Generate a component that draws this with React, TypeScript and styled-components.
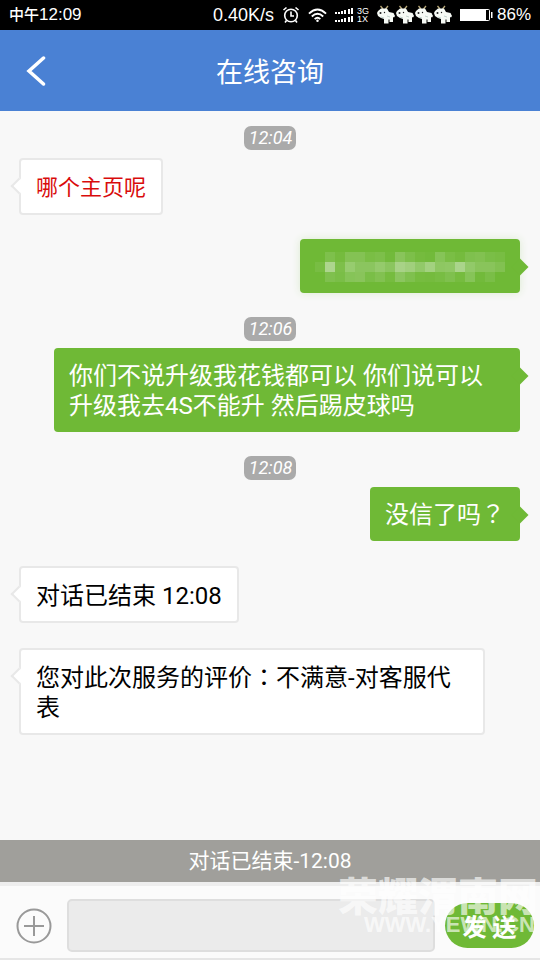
import React from "react";
import styled, { createGlobalStyle, css } from "styled-components";

const Global = createGlobalStyle`
  *, *::before, *::after { box-sizing: border-box; }
  body {
    margin: 0;
    background: #f8f8f8;
    font-family: Roboto, "Noto Sans CJK SC", sans-serif;
  }
`;

const Screen = styled.div`
  display: flex;
  flex-direction: column;
  min-height: 100vh;
`;

const StatusBar = styled.div`
  display: flex;
  align-items: center;
  justify-content: space-between;
  height: 30px;
  padding: 0 9px;
  background: #000;
  color: #fff;
  font-family: "Liberation Sans", "Noto Sans CJK SC", sans-serif;
  font-size: 17px;
  line-height: 30px;
`;

const Clock = styled.span`
  display: flex;
`;

const DayPart = styled.span`
  font-size: 15px;
  font-weight: 500;
`;

const StatusGroup = styled.div`
  display: flex;
  align-items: center;
  gap: 8px;
`;

const Speed = styled.span`
  font-size: 18px;
`;

const Signal = styled.span`
  display: flex;
  align-items: center;
  gap: 3px;
`;

const Network = styled.span`
  display: flex;
  flex-direction: column;
  font-size: 9px;
  line-height: 8px;
`;

const Goats = styled.span`
  display: flex;
  gap: 1px;
`;

const Battery = styled.span`
  display: flex;
  align-items: center;
  gap: 4px;
`;

const Header = styled.header`
  display: grid;
  grid-template-columns: 72px 1fr 72px;
  align-items: center;
  height: 81px;
  background: #4a81d4;
  color: #fff;
`;

const BackButton = styled.button`
  display: flex;
  align-items: center;
  justify-content: center;
  height: 81px;
  padding: 0;
  border: 0;
  background: none;
  color: inherit;
`;

const Title = styled.h1`
  margin: 0;
  padding-top: 4px;
  font-size: 27px;
  line-height: 36px;
  font-weight: 400;
  text-align: center;
`;

const Chat = styled.main`
  flex: 1;
  display: flex;
  flex-direction: column;
  align-items: flex-start;
  padding: 15px 20px 0;
`;

const TimeStamp = styled.time`
  align-self: center;
  height: 24px;
  margin-bottom: 7px;
  padding: 0 4px 0 5px;
  border-radius: 7px;
  background: #aaa;
  color: #fff;
  font-size: 18px;
  line-height: 24px;
  font-style: italic;
`;

const Bubble = styled.p<{ $mine?: boolean; $alert?: boolean }>`
  position: relative;
  max-width: calc(100% - 34px);
  margin: 0 0 24px;
  border-radius: 4px;
  font-size: ${(p) => (p.$alert ? 22 : 24)}px;
  line-height: 30px;

  &::after {
    content: "";
    position: absolute;
    width: 12px;
    height: 12px;
    transform: rotate(45deg);
  }

  ${(p) =>
    p.$mine
      ? css`
          align-self: flex-end;
          padding: 13px 15px 11px;
          background: #6fb936;
          color: #fff;
          &::after {
            top: 22px;
            right: -6px;
            background: #6fb936;
          }
        `
      : css`
          margin-top: 1px;
          margin-left: -1px;
          padding: 13px 15px 10px;
          border: 2px solid #e8e8e8;
          background: #fff;
          color: ${p.$alert ? "#d90b0b" : "#000"};
          &::after {
            top: 20px;
            left: -8px;
            border: solid #e8e8e8;
            border-width: 0 0 2px 2px;
            background: #fff;
          }
        `}
`;

const CensoredBubble = styled(Bubble)`
  box-shadow: 0 0 8px #dcebd0;
`;

const MosaicArt = styled.svg`
  display: block;
  width: 190px;
  height: 30px;
`;

const Mark = styled.span`
  font-family: "Noto Sans CJK TC", sans-serif;
  line-height: 24px;
`;

const Notice = styled.div`
  height: 42px;
  background: #a09f9b;
  color: #fff;
  font-size: 21px;
  line-height: 42px;
  text-align: center;
`;

const Composer = styled.form`
  position: relative;
  display: flex;
  align-items: center;
  gap: 10px;
  height: 78px;
  padding: 6px 6px 0 16px;
  border-top: 4px solid #eee;
  border-bottom: 2px solid #e6e6e6;
  background: #fbfbfb;
`;

const AddButton = styled.button`
  display: flex;
  padding: 2px 0 0;
  border: 0;
  background: none;
`;

const Field = styled.input`
  flex: 1;
  min-width: 0;
  height: 53px;
  margin-left: 5px;
  padding: 0 12px;
  border: 2px solid #dedede;
  border-radius: 5px;
  background: #ebebeb;
  font-size: 24px;
`;

const SendButton = styled.button`
  width: 89px;
  height: 45px;
  padding: 0;
  border: 0;
  border-radius: 23px;
  background: #6fb936;
  color: #fff;
  font-family: inherit;
  font-size: 24px;
  font-weight: 700;
`;

const Watermark = styled.div`
  position: absolute;
  right: 2px;
  bottom: 22px;
  color: rgba(255, 255, 255, 0.65);
  font-family: "Noto Sans CJK SC", sans-serif;
  font-weight: 900;
  font-size: 40px;
  line-height: 40px;
  text-align: right;
  pointer-events: none;
`;

const WatermarkSite = styled.div`
  padding-right: 3px;
  font-family: "Liberation Sans", sans-serif;
  font-weight: 700;
  font-size: 22px;
  line-height: 22px;
`;

const AlarmIcon = () => (
  <svg width="18" height="18" viewBox="0 0 18 18" fill="none" stroke="#fff" strokeWidth="1.6">
    <circle cx="9" cy="9.5" r="6.3" />
    <path d="M9 5.500v4.500h3M1.500 4l3-2.500M16.500 4l-3-2.500M4.500 14.500l-1.500 2M13.500 14.500l1.500 2" />
  </svg>
);

const WifiIcon = () => (
  <svg width="19" height="16" viewBox="0 0 20 16" fill="none" stroke="#fff" strokeWidth="2">
    <path d="M1 6.500Q10-2 19 6.500M4 9.500Q10 4 16 9.500M7 12.300Q10 9.500 13 12.300" />
    <circle cx="10" cy="14" r="1.3" fill="#fff" stroke="none" />
  </svg>
);

const barHeights = [2, 2, 3, 4, 5, 6];

const SignalBars = () => (
  <svg width="19" height="15" viewBox="0 0 19 15" fill="#fff">
    {barHeights.map((h, i) => (
      <React.Fragment key={i}>
        <rect x={i * 3 + (i > 3 ? 1 : 0)} y={6 - h} width="2" height={h} />
        <rect x={i * 3 + (i > 3 ? 1 : 0)} y={14 - h} width="2" height={h} />
      </React.Fragment>
    ))}
  </svg>
);

const Goat = () => (
  <svg width="18" height="20" viewBox="0 0 18 20">
    <path d="M3.500 1l2.500 3M11 1L8.500 4" stroke="#b8a878" strokeWidth="1.3" />
    <path
      d="M1 6l3-2.500h6l2 3.500 4.500 1 1.500 3-1 1.500-1-.500v5h-3.500v-2.500h-1v4H7v-4.500l-3-1-3-2-1-3z"
      fill="#f6faf5"
    />
    <circle cx="3.500" cy="8" r="1" fill="#222" />
    <circle cx="7.500" cy="7.500" r=".7" fill="#222" />
    <path d="M4 12l3 1M10 11l3 1" stroke="#b4c8c0" strokeWidth=".8" />
  </svg>
);

const BatteryIcon = () => (
  <svg width="33" height="14" viewBox="0 0 33 14">
    <rect x="0.500" y="1.500" width="29" height="11" rx="1" fill="none" stroke="#fff" />
    <rect x="0" y="1" width="26" height="12" fill="#fff" />
    <path d="M31 4h1.500v6H31z" fill="#fff" />
  </svg>
);

const mosaicRows = [
  [0, 13, 5, 18, 18, 9, 12, 3, 22, 12, 5, 3, 20, 9, 5, 14, 16, 10, 8],
  [8, 52, 12, 34, 24, 24, 32, 24, 48, 42, 30, 44, 26, 28, 50, 30, 22, 22, 16],
  [0, 14, 10, 20, 22, 10, 16, 6, 24, 14, 6, 5, 8, 14, 6, 20, 3, 10, 0],
];

const Mosaic = () => (
  <MosaicArt viewBox="0 0 190 30" role="img" aria-label="已打码">
    {mosaicRows.flatMap((row, y) =>
      row.map((v, x) => (
        <rect
          key={`${x}-${y}`}
          x={x * 10}
          y={y * 10}
          width="10"
          height="10"
          fill="#e6efe0"
          fillOpacity={v / 100}
        />
      ))
    )}
  </MosaicArt>
);

export default function App() {
  return (
    <Screen>
      <Global />
      <StatusBar>
        <Clock>
          <DayPart>中午</DayPart>12:09
        </Clock>
        <StatusGroup>
          <Speed>0.40K/s</Speed>
          <AlarmIcon />
          <WifiIcon />
          <Signal>
            <SignalBars />
            <Network>
              <span>3G</span>
              <span>1X</span>
            </Network>
          </Signal>
          <Goats>
            <Goat />
            <Goat />
            <Goat />
            <Goat />
          </Goats>
          <Battery>
            <BatteryIcon />
            86%
          </Battery>
        </StatusGroup>
      </StatusBar>
      <Header>
        <BackButton type="button" aria-label="返回">
          <svg width="20" height="30" viewBox="0 0 20 30" fill="none" stroke="currentColor" strokeWidth="3.5" strokeLinecap="round">
            <path d="M17.500 2L3 15l14.500 13" />
          </svg>
        </BackButton>
        <Title>在线咨询</Title>
      </Header>
      <Chat>
        <TimeStamp>12:04</TimeStamp>
        <Bubble $alert>哪个主页呢</Bubble>
        <CensoredBubble $mine>
          <Mosaic />
        </CensoredBubble>
        <TimeStamp>12:06</TimeStamp>
        <Bubble $mine>你们不说升级我花钱都可以 你们说可以升级我去4S不能升 然后踢皮球吗</Bubble>
        <TimeStamp>12:08</TimeStamp>
        <Bubble $mine>
          没信了吗<Mark>？</Mark>
        </Bubble>
        <Bubble>对话已结束 12:08</Bubble>
        <Bubble>
          您对此次服务的评价<Mark>：</Mark>不满意-对客服代表
        </Bubble>
      </Chat>
      <Notice>对话已结束-12:08</Notice>
      <Composer>
        <AddButton type="button" aria-label="更多">
          <svg width="36" height="36" viewBox="0 0 36 36" fill="none" stroke="#999" strokeWidth="2">
            <circle cx="18" cy="18" r="16.5" />
            <path d="M8 18h20M18 8v20" />
          </svg>
        </AddButton>
        <Field type="text" aria-label="消息" />
        <SendButton type="submit">发 送</SendButton>
        <Watermark aria-hidden="true">
          荣耀渭南网
          <WatermarkSite>WWW.YEWN.CN</WatermarkSite>
        </Watermark>
      </Composer>
    </Screen>
  );
}
